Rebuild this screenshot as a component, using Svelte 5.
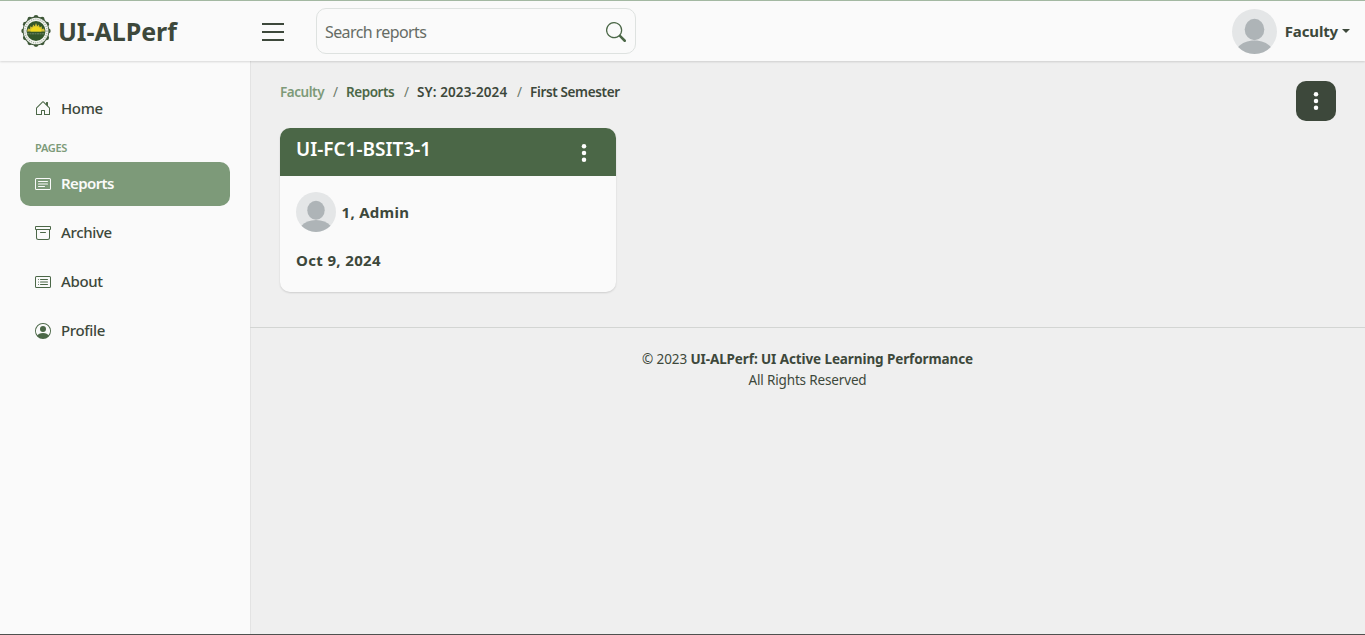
<script>
  const pages = [
    { label: 'Reports', icon: 'card', active: true },
    { label: 'Archive', icon: 'archive' },
    { label: 'About', icon: 'list' },
    { label: 'Profile', icon: 'person' },
  ];
  const scallops = Array.from({ length: 12 }, (_, i) => {
    const a = (i * Math.PI) / 6;
    return { x: 15 + 12.3 * Math.sin(a), y: 16 - 13.6 * Math.cos(a) };
  });
</script>

{#snippet icon(name)}
  <svg class="nav-icon" viewBox="0 0 16 16" fill="currentColor" aria-hidden="true">
    {#if name === 'home'}
      <path d="M8.707 1.5a1 1 0 0 0-1.414 0L1.300 7.500A1 1 0 0 0 1 8.200V14.500a.5.5 0 0 0 .5.5H6.500a.5.5 0 0 0 .5-.5V11h2v3.500a.5.5 0 0 0 .5.5h5a.5.5 0 0 0 .5-.5V8.200a1 1 0 0 0-.3-.7L13 5.793V2.500a.5.5 0 0 0-.5-.5h-1a.5.5 0 0 0-.5.5v1.293zM14 8.207V14H10v-3.500a.5.5 0 0 0-.5-.5h-3a.5.5 0 0 0-.5.5V14H2V8.207l6-6z" />
    {:else if name === 'card'}
      <path d="M14.500 3a.5.5 0 0 1 .5.5v9a.5.5 0 0 1-.5.5h-13a.5.5 0 0 1-.5-.5v-9a.5.5 0 0 1 .5-.5zm-13-1A1.500 1.500 0 0 0 0 3.500v9A1.500 1.500 0 0 0 1.500 14h13a1.500 1.500 0 0 0 1.500-1.500v-9A1.500 1.500 0 0 0 14.500 2z" />
      <path d="M3 5.500a.5.5 0 0 1 .5-.5h9a.5.5 0 0 1 0 1h-9a.5.5 0 0 1-.5-.5M3 8a.5.5 0 0 1 .5-.5h9a.5.5 0 0 1 0 1h-9A.5.5 0 0 1 3 8m0 2.500a.5.5 0 0 1 .5-.5h6a.5.5 0 0 1 0 1h-6a.5.5 0 0 1-.5-.5" />
    {:else if name === 'archive'}
      <path d="M0 2a1 1 0 0 1 1-1h14a1 1 0 0 1 1 1v2a1 1 0 0 1-1 1v7.500a2.500 2.500 0 0 1-2.500 2.500h-9A2.500 2.500 0 0 1 1 12.500V5a1 1 0 0 1-1-1zm2 3v7.500A1.500 1.500 0 0 0 3.500 14h9a1.500 1.500 0 0 0 1.500-1.500V5zm13-3H1v2h14zM5 7.500a.5.5 0 0 1 .5-.5h5a.5.5 0 0 1 0 1h-5a.5.5 0 0 1-.5-.5" />
    {:else if name === 'list'}
      <path d="M14.500 3a.5.5 0 0 1 .5.5v9a.5.5 0 0 1-.5.5h-13a.5.5 0 0 1-.5-.5v-9a.5.5 0 0 1 .5-.5zm-13-1A1.500 1.500 0 0 0 0 3.500v9A1.500 1.500 0 0 0 1.500 14h13a1.500 1.500 0 0 0 1.500-1.500v-9A1.500 1.500 0 0 0 14.500 2z" />
      <path d="M5 8a.5.5 0 0 1 .5-.5h7a.5.5 0 0 1 0 1h-7A.5.5 0 0 1 5 8m0-2.500a.5.5 0 0 1 .5-.5h7a.5.5 0 0 1 0 1h-7a.5.5 0 0 1-.5-.5m0 5a.5.5 0 0 1 .5-.5h7a.5.5 0 0 1 0 1h-7a.5.5 0 0 1-.5-.5m-1-5a.5.5 0 1 1-1 0 .5.5 0 0 1 1 0M4 8a.5.5 0 1 1-1 0 .5.5 0 0 1 1 0m0 2.500a.5.5 0 1 1-1 0 .5.5 0 0 1 1 0" />
    {:else}
      <path d="M11 6a3 3 0 1 1-6 0 3 3 0 0 1 6 0" />
      <path fill-rule="evenodd" d="M0 8a8 8 0 1 1 16 0A8 8 0 0 1 0 8m8-7a7 7 0 0 0-5.468 11.370C3.242 11.226 4.805 10 8 10s4.757 1.225 5.468 2.370A7 7 0 0 0 8 1" />
    {/if}
  </svg>
{/snippet}

{#snippet avatar(size)}
  <svg class="avatar" width={size} height={size} viewBox="0 0 45 45" aria-hidden="true">
    <circle cx="22.500" cy="22.500" r="22.500" fill="#e4e6e7" />
    <ellipse cx="22.500" cy="20.500" rx="9.800" ry="10.700" fill="#aeb4b7" />
    <path d="M6.200 38C10 33.800 15.500 31.500 22.500 31.500S35 33.800 38.800 38A22.500 22.500 0 0 1 6.200 38Z" fill="#aeb4b7" />
  </svg>
{/snippet}

{#snippet dots()}
  <svg class="dots" width="20" height="20" viewBox="0 0 20 20" fill="#fff" aria-hidden="true">
    <circle cx="10" cy="3.200" r="2.250" /><circle cx="10" cy="10" r="2.250" /><circle cx="10" cy="16.800" r="2.250" />
  </svg>
{/snippet}

<div class="app">
  <header>
    <div class="brand">
      <svg class="seal" width="30" height="32" viewBox="0 0 30 32" aria-hidden="true">
        {#each scallops as s}<circle cx={s.x} cy={s.y} r="2.400" fill="#3e5738" />{/each}
        <ellipse cx="15" cy="16" rx="13.300" ry="14.500" fill="#3e5738" />
        <ellipse cx="15" cy="16" rx="12.400" ry="13.300" fill="#f2f4f0" />
        <ellipse cx="15" cy="16" rx="11" ry="11.800" fill="none" stroke="#a3ae9e" stroke-width="1.300" stroke-dasharray="1 1.200" />
        <ellipse cx="15" cy="16" rx="9.500" ry="10" fill="#34572b" />
        <path d="m6 16.500 1-3 2 .6.300-2.800 1.900 1 1.100-2.900 1.400 1.800L15 8l1.300 3.200 1.400-1.800 1.100 2.900 1.900-1 .3 2.800 2-.6 1 3Z" fill="#cfbd36" />
        <path d="M9.500 16.500a5.500 5 0 0 1 11 0Z" fill="#f0d91f" />
        <path d="M6 18.800h18" stroke="#71876a" stroke-width="1" stroke-dasharray="2 .5" />
      </svg>
      <span class="brand-name">UI-ALPerf</span>
    </div>
    <svg class="burger" width="22" height="18" viewBox="0 0 22 18" aria-hidden="true">
      <path d="M0 1h22M0 9h22M0 17h22" stroke="#3d483b" stroke-width="2" />
    </svg>
    <div class="search">
      <span>Search reports</span>
      <svg width="20" height="20" viewBox="0 0 16 16" fill="#4b6747" aria-hidden="true">
        <path d="M11.742 10.344a6.500 6.500 0 1 0-1.397 1.398h-.001q.044.060.098.115l3.850 3.850a1 1 0 0 0 1.415-1.414l-3.850-3.850a1 1 0 0 0-.115-.1zM12 6.500a5.500 5.500 0 1 1-11 0 5.500 5.500 0 0 1 11 0" />
      </svg>
    </div>
    <div class="user">
      {@render avatar(45)}
      <span class="user-name">Faculty</span>
      <i class="caret"></i>
    </div>
  </header>

  <div class="body">
    <aside>
      <div class="item home">{@render icon('home')}<span>Home</span></div>
      <div class="heading">PAGES</div>
      {#each pages as p}
        <div class="item" class:active={p.active}>{@render icon(p.icon)}<span>{p.label}</span></div>
      {/each}
    </aside>

    <div class="content">
      <main>
        <div class="top">
          <nav class="crumbs">
            <span class="c1">Faculty</span><i>/</i><span class="c2">Reports</span><i>/</i><span class="c3">SY: 2023-2024</span><i>/</i><span class="c4">First Semester</span>
          </nav>
          <div class="menu">{@render dots()}</div>
        </div>
        <section class="card">
          <div class="card-head"><h5>UI-FC1-BSIT3-1</h5>{@render dots()}</div>
          <div class="card-body">
            <div class="owner">{@render avatar(40)}<span>1, Admin</span></div>
            <div class="date">Oct 9, 2024</div>
          </div>
        </section>
      </main>
      <footer>
        <div>© 2023 <strong>UI-ALPerf: UI Active Learning Performance</strong></div>
        <div class="rights">All Rights Reserved</div>
      </footer>
    </div>
  </div>
</div>

<style>
  :global(body) { background: #efefef; }
  .app {
    box-sizing: border-box;
    height: 635px;
    display: flex;
    flex-direction: column;
    border-top: 1px solid #a3b8a2;
    border-bottom: 1px solid #4f514f;
    font-family: "Noto Sans", "Open Sans", sans-serif;
    color: #3d483b;
    white-space: nowrap;
    overflow: hidden;
  }
  svg { display: block; flex: none; }
  header {
    position: relative;
    z-index: 1;
    box-sizing: border-box;
    height: 60px;
    flex: none;
    display: flex;
    align-items: center;
    padding: 0 15px 0 20px;
    background: #fafafa;
    box-shadow: 0 1px 2px rgba(0, 0, 0, 0.14);
  }
  .brand { display: flex; align-items: center; gap: 7px; width: 242px; }
  .seal { margin-left: 1px; }
  .brand-name { font-size: 25px; font-weight: 700; line-height: 32px; letter-spacing: -0.05px; }
  .burger { margin-top: 2px; }
  .search {
    box-sizing: border-box;
    width: 320px;
    height: 46px;
    margin-left: 32px;
    padding: 0 9.5px 0 8px;
    display: flex;
    align-items: center;
    justify-content: space-between;
    border: 1px solid #dee2e0;
    border-radius: 10px;
    font-size: 16px;
    color: #666c65;
  }
  .search span { letter-spacing: -0.6px; margin-top: 1px; }
  .search svg { margin-top: 1px; }
  .user { margin-left: auto; display: flex; align-items: center; }
  .user-name { margin-left: 8px; font-size: 15px; font-weight: 700; letter-spacing: -0.15px; }
  .caret { margin-left: 4px; border: 4px solid transparent; border-top-color: #3d483b; border-bottom: 0; }
  .body { flex: 1; display: flex; min-height: 0; }
  aside {
    box-sizing: border-box;
    width: 250px;
    padding: 25px 20px;
    background: #fafafa;
    box-shadow: 1px 0 0 #e3e3e3;
  }
  .item {
    box-sizing: border-box;
    height: 44px;
    margin-bottom: 5px;
    padding: 0 15px;
    display: flex;
    align-items: center;
    gap: 10px;
    border-radius: 10px;
    font-size: 15px;
    font-weight: 500;
    letter-spacing: -0.35px;
  }
  .item span { margin-top: -3px; }
  .item.home span { margin-top: -1px; }
  .item.active { background: #7d9a79; color: #fafafa; font-weight: 600; letter-spacing: -0.6px; }
  .nav-icon { width: 16px; height: 16px; color: #4b6747; }
  .active .nav-icon { color: #fafafa; }
  .heading {
    height: 22px;
    margin: 10px 0 0 15px;
    font-size: 11px;
    line-height: 15px;
    font-weight: 600;
    color: #7d9a79;
    letter-spacing: -0.3px;
  }
  .content { flex: 1; }
  main { box-sizing: border-box; height: 266px; padding: 20px 29px 0 30px; }
  .top { display: flex; justify-content: space-between; height: 47px; }
  .crumbs { display: flex; gap: 8px; font-size: 13.5px; line-height: 23px; font-weight: 600; letter-spacing: -0.45px; }
  .crumbs i { width: 5px; font-style: normal; font-weight: 400; color: #6c7a69; }
  .crumbs .c1 { color: #7d9a79; width: 45px; }
  .crumbs .c2 { color: #4b6747; width: 50px; }
  .crumbs .c3 { width: 92px; letter-spacing: 0.1px; }
  .crumbs .c4 { letter-spacing: -0.35px; }
  .menu { width: 40px; height: 40px; display: grid; place-items: center; border-radius: 10px; background: #3d483b; }
  .card { width: 336px; height: 164px; border-radius: 10px; overflow: hidden; background: #fafafa; box-shadow: 0 1px 2px rgba(0, 0, 0, 0.14); }
  .card-head {
    box-sizing: border-box;
    height: 48px;
    padding: 8px 22px 0 16px;
    display: flex;
    justify-content: space-between;
    background: #4b6747;
    color: #fff;
  }
  h5 { margin: 0; font-size: 19px; line-height: 26px; font-weight: 600; }
  .card-head :global(.dots) { margin-top: 7px; }
  .card-body { padding: 16px; font-size: 15px; font-weight: 700; letter-spacing: 0.3px; }
  .owner { display: flex; align-items: center; gap: 5.5px; }
  .date { margin-top: 16px; line-height: 24px; letter-spacing: 0.35px; }
  footer { border-top: 1px solid #d3d5d3; padding-top: 21px; text-align: center; font-size: 13.5px; line-height: 21px; letter-spacing: -0.1px; }
  .rights { letter-spacing: -0.15px; }
</style>
